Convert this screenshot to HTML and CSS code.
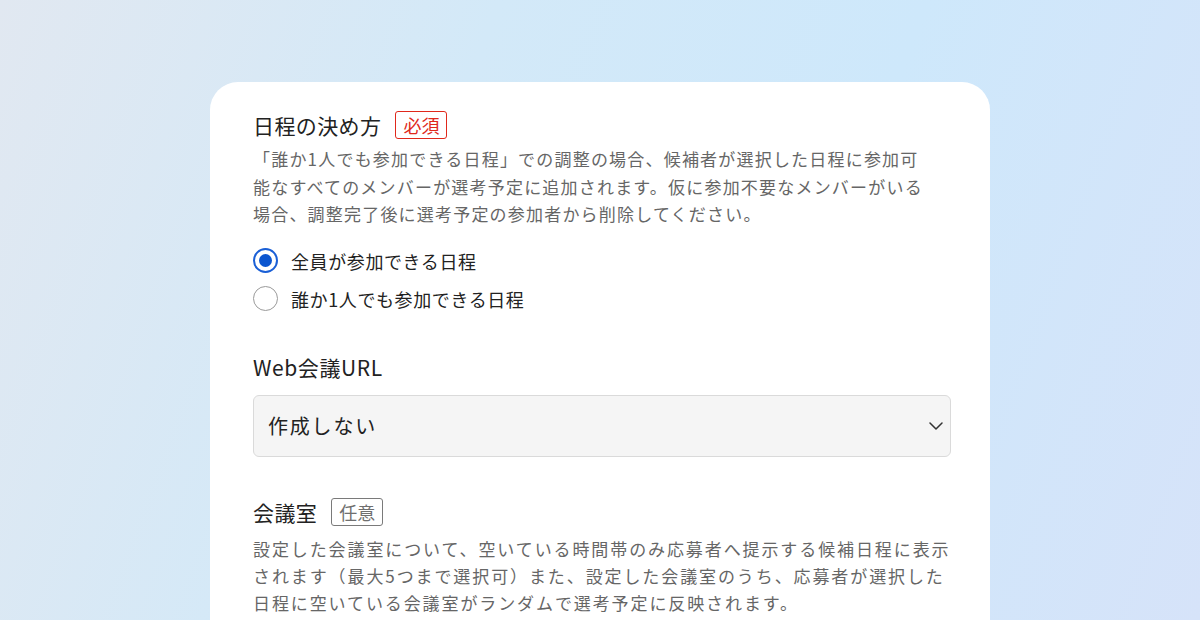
FILE: index.html
```html
<!DOCTYPE html>
<html lang="ja">
<head>
    <meta charset="UTF-8">
    <meta name="viewport" content="width=device-width, initial-scale=1.0">
    <title>日程調整の設定</title>
    <link rel="stylesheet" href="styles.css">
</head>
<body>
    <main class="card">
        <section class="field">
            <div class="field-head">
                <h2 class="field-title">日程の決め方</h2>
                <span class="tag tag-required">必須</span>
            </div>
            <p class="field-desc">「誰か1人でも参加できる日程」での調整の場合、候補者が選択した日程に参加可<br>能なすべてのメンバーが選考予定に追加されます。仮に参加不要なメンバーがいる<br>場合、調整完了後に選考予定の参加者から削除してください。</p>
            <div class="radios">
                <label class="radio">
                    <input type="radio" name="mode" checked>
                    <span>全員が参加できる日程</span>
                </label>
                <label class="radio">
                    <input type="radio" name="mode">
                    <span>誰か1人でも参加できる日程</span>
                </label>
            </div>
        </section>

        <section class="field field-url">
            <div class="field-head">
                <h2 class="field-title">Web会議URL</h2>
            </div>
            <div class="select-wrap">
                <select class="select">
                    <option>作成しない</option>
                    <option>Google Meet</option>
                    <option>Zoom</option>
                </select>
                <svg class="chevron" width="14" height="8" viewBox="0 0 14 8" fill="none">
                    <path d="M1 1l6 6 6-6" stroke="#333" stroke-width="1.5" stroke-linecap="round" stroke-linejoin="round"/>
                </svg>
            </div>
        </section>

        <section class="field field-room">
            <div class="field-head">
                <h2 class="field-title">会議室</h2>
                <span class="tag tag-optional">任意</span>
            </div>
            <p class="field-desc desc-room">設定した会議室について、空いている時間帯のみ応募者へ提示する候補日程に表示<br>されます（最大5つまで選択可）また、設定した会議室のうち、応募者が選択した<br>日程に空いている会議室がランダムで選考予定に反映されます。</p>
        </section>
    </main>
</body>
</html>
```

FILE: styles.css
```css
/* styles.css */
* {
    box-sizing: border-box;
}

html, body {
    height: 100%;
}

body {
    margin: 0;
    overflow: hidden;
    font-family: "Noto Sans CJK JP", "Noto Sans", sans-serif;
    color: #222;
    background: linear-gradient(110deg, #e1e8f1 0%, #d3e9f8 35%, #cee8fb 65%, #d6e3f9 100%);
}

.card {
    width: 780px;
    min-height: 700px;
    margin: 82px auto 0;
    padding: 28px 39px 0 43px;
    background-color: #fff;
    border-radius: 28px;
}

.field-head {
    display: flex;
    align-items: center;
    gap: 14px;
    height: 30px;
}

.field-title {
    margin: 0;
    font-size: 21px;
    font-weight: 400;
    letter-spacing: 0.4px;
    color: #222;
}

.tag {
    display: inline-flex;
    align-items: center;
    height: 28px;
    padding: 0 7px;
    font-size: 18px;
    border-radius: 3px;
}

.tag-required {
    color: #e0281b;
    border: 1.5px solid #e0281b;
}

.tag-optional {
    color: #6f6f6f;
    border: 1.5px solid #7a7a7a;
}

.field-desc {
    margin: 5px 0 0;
    font-size: 17px;
    line-height: 27.5px;
    letter-spacing: 1.2px;
    color: #666;
}

.radios {
    margin-top: 14px;
}

.radio {
    display: flex;
    align-items: center;
    gap: 13px;
    height: 38px;
    font-size: 18px;
    letter-spacing: 0.6px;
    color: #222;
    cursor: pointer;
}

.radio input {
    appearance: none;
    margin: 0;
    width: 25px;
    height: 25px;
    border: 1.5px solid #9a9a9a;
    border-radius: 50%;
    background: #fff;
    display: grid;
    place-items: center;
}

.radio input:checked {
    border: 2px solid #1a5fd6;
}

.radio input:checked::after {
    content: "";
    width: 13px;
    height: 13px;
    border-radius: 50%;
    background: #0b55cf;
}

.field-url {
    margin-top: 34px;
}

.field-url .field-title {
    letter-spacing: 0.6px;
}

.select-wrap {
    position: relative;
    margin-top: 13px;
}

.select {
    appearance: none;
    width: 100%;
    height: 62px;
    padding: 0 40px 0 14px;
    font-family: inherit;
    font-size: 20px;
    letter-spacing: 1.8px;
    color: #222;
    background-color: #f5f5f5;
    border: 1.5px solid #dadada;
    border-radius: 6px;
}

.chevron {
    position: absolute;
    right: 8px;
    top: 27px;
    pointer-events: none;
}

.field-room {
    margin-top: 40px;
}

.desc-room {
    margin-top: 8px;
    line-height: 27px;
    letter-spacing: 1.9px;
}
```
